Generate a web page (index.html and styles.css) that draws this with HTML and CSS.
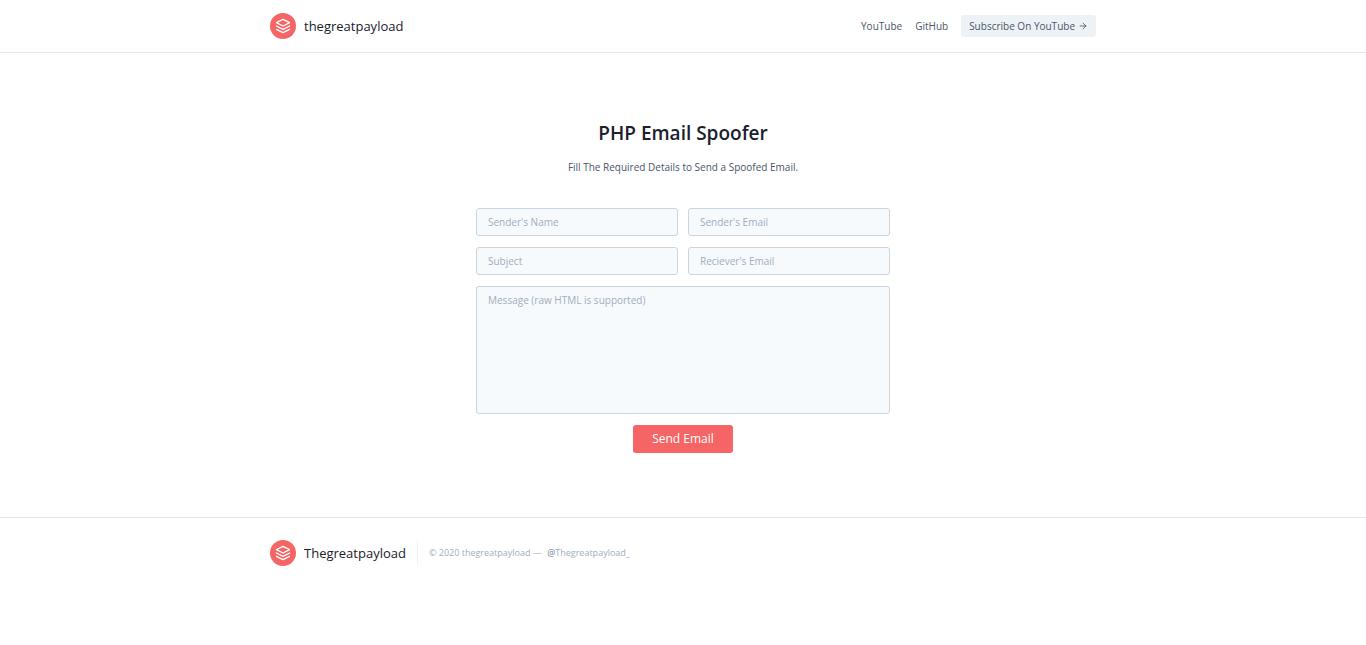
FILE: index.html
```html
<!DOCTYPE html>
<html lang="en">
<head>
<meta charset="utf-8">
<meta name="viewport" content="width=device-width, initial-scale=1">
<title>PHP Email Spoofer</title>
<link rel="stylesheet" href="styles.css">
</head>
<body>
<header class="site-header">
  <div class="container header-row">
    <a class="brand" href="#">
      <svg class="brand-icon" viewBox="0 0 24 24" aria-hidden="true"><path d="M12 2L2 7l10 5 10-5-10-5zM2 17l10 5 10-5M2 12l10 5 10-5"/></svg>
      <span>thegreatpayload</span>
    </a>
    <nav class="nav">
      <a href="#">YouTube</a>
      <a href="#">GitHub</a>
      <button class="subscribe" type="button">Subscribe On YouTube
        <svg class="arrow" viewBox="0 0 24 24" aria-hidden="true"><path d="M5 12h14M12 5l7 7-7 7"/></svg>
      </button>
    </nav>
  </div>
</header>
<main class="main">
  <h1 class="title">PHP Email Spoofer</h1>
  <p class="lead">Fill The Required Details to Send a Spoofed Email.</p>
  <form class="form">
    <input class="field" type="text" placeholder="Sender's Name" aria-label="Sender's Name">
    <input class="field" type="email" placeholder="Sender's Email" aria-label="Sender's Email">
    <input class="field" type="text" placeholder="Subject" aria-label="Subject">
    <input class="field" type="email" placeholder="Reciever's Email" aria-label="Reciever's Email">
    <textarea class="field message" placeholder="Message (raw HTML is supported)" aria-label="Message"></textarea>
    <button class="send" type="submit">Send Email</button>
  </form>
</main>
<footer class="site-footer">
  <div class="container footer-row">
    <a class="brand" href="#">
      <svg class="brand-icon" viewBox="0 0 24 24" aria-hidden="true"><path d="M12 2L2 7l10 5 10-5-10-5zM2 17l10 5 10-5M2 12l10 5 10-5"/></svg>
      <span>Thegreatpayload</span>
    </a>
    <p class="copyright">© 2020 thegreatpayload — <a class="handle" href="#"><span class="at">@</span>Thegreatpayload_</a></p>
  </div>
</footer>
</body>
</html>
```

FILE: styles.css
```css
* {
  box-sizing: border-box;
}

body {
  margin: 0;
  background: #fff;
  color: #4a5568;
  font-family: "Segoe UI", "Open Sans", "Noto Sans", sans-serif;
  font-size: 10px;
  line-height: 16px;
}

a {
  color: inherit;
  text-decoration: none;
}

button,
input,
textarea {
  font: inherit;
}

.container {
  max-width: 852px;
  margin: 0 auto;
  padding: 0 13px;
}

.site-header {
  border-bottom: 1px solid #e2e8f0;
}

.header-row {
  display: flex;
  align-items: center;
  justify-content: space-between;
  height: 52px;
}

.brand {
  display: flex;
  align-items: center;
  gap: 8px;
  color: #1a202c;
  font-size: 13px;
  font-weight: 500;
  line-height: 20px;
}

.brand-icon {
  width: 26px;
  height: 26px;
  padding: 5px;
  border-radius: 50%;
  background: #f56565;
  fill: none;
  stroke: #fff;
  stroke-width: 2;
  stroke-linecap: round;
  stroke-linejoin: round;
}

.nav {
  display: flex;
  align-items: center;
  gap: 13px;
}

.subscribe {
  display: flex;
  align-items: center;
  gap: 3px;
  padding: 3px 8px;
  border: 0;
  border-radius: 3px;
  background: #edf2f7;
  color: inherit;
}

.arrow {
  width: 10px;
  height: 10px;
  fill: none;
  stroke: currentColor;
  stroke-width: 2;
  stroke-linecap: round;
  stroke-linejoin: round;
}

.main {
  padding: 64px 13px;
  text-align: center;
}

.title {
  margin: 0 0 10px;
  color: #1a202c;
  font-size: 19px;
  font-weight: 600;
  line-height: 32px;
}

.lead {
  margin: 0 0 33px;
}

.form {
  display: grid;
  grid-template-columns: 1fr 1fr;
  gap: 11px 10px;
  max-width: 414px;
  margin: 0 auto;
}

.field {
  width: 100%;
  padding: 5px 11px;
  border: 1px solid #cbd5e0;
  border-radius: 3px;
  background: #f7fafc;
  color: #4a5568;
}

.field::placeholder {
  color: #a0aec0;
  opacity: 1;
}

.message {
  grid-column: 1 / -1;
  display: block;
  height: 128px;
  resize: none;
}

.send {
  grid-column: 1 / -1;
  justify-self: center;
  padding: 4px 19px;
  border: 0;
  border-radius: 3px;
  background: #f56565;
  color: #fff;
  font-size: 12px;
  line-height: 20px;
}

.site-footer {
  border-top: 1px solid #e2e8f0;
}

.footer-row {
  display: flex;
  align-items: center;
  gap: 11px;
  padding-top: 22px;
  padding-bottom: 22px;
}

.copyright {
  margin: 0;
  padding: 4px 0 4px 11px;
  border-left: 1px solid #edf2f7;
  color: #a0aec0;
  font-size: 9px;
}

.handle {
  margin-left: 3px;
}

.at {
  color: #718096;
}
```
